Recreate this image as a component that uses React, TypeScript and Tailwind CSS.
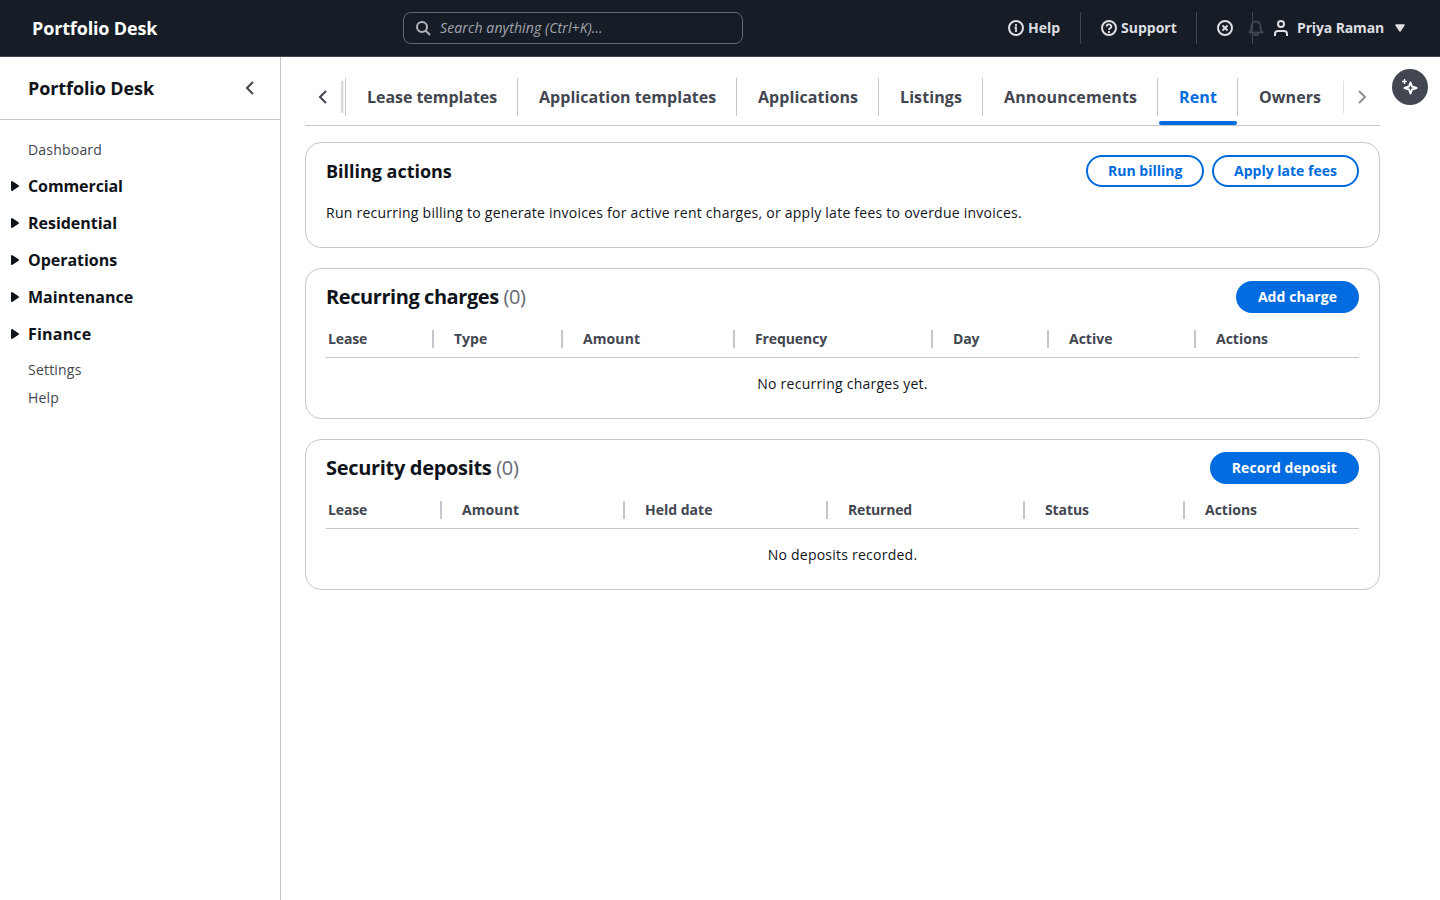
import React from "react";

const tabs = [
  { label: "Lease templates", width: "w-[172px] tracking-[-0.05px]" },
  { label: "Application templates", width: "w-[219px] tracking-[0.04px]" },
  { label: "Applications", width: "w-[142px] tracking-[0.07px]" },
  { label: "Listings", width: "w-[104px] tracking-[0.1px]" },
  { label: "Announcements", width: "w-[175px] tracking-[0.15px]" },
  { label: "Rent", width: "w-[80px] tracking-[0.15px]", active: true },
  { label: "Owners", width: "w-[106px] tracking-[0.07px]" },
];

const sections = [
  { label: "Commercial", tracking: "tracking-[-0.1px]" },
  { label: "Residential", tracking: "tracking-[-0.03px]" },
  { label: "Operations", tracking: "tracking-[-0.03px]" },
  { label: "Maintenance", tracking: "tracking-[0.03px]" },
  { label: "Finance", tracking: "tracking-[0.2px]" },
];

const chargeColumns = [
  { label: "Lease", width: "w-[108px] tracking-[-0.15px]" },
  { label: "Type", width: "w-[129px]" },
  { label: "Amount", width: "w-[172px] tracking-[0.1px]" },
  { label: "Frequency", width: "w-[198px] tracking-[-0.1px]" },
  { label: "Day", width: "w-[116px] tracking-[-0.2px]" },
  { label: "Active", width: "w-[147px]" },
  { label: "Actions", width: "w-[163px]" },
];

const depositColumns = [
  { label: "Lease", width: "w-[116px] tracking-[-0.15px]" },
  { label: "Amount", width: "w-[183px] tracking-[0.1px]" },
  { label: "Held date", width: "w-[203px]" },
  { label: "Returned", width: "w-[197px] tracking-[-0.18px]" },
  { label: "Status", width: "w-[160px] tracking-[-0.1px]" },
  { label: "Actions", width: "w-[174px]" },
];

type Column = { label: string; width: string };

function Icon({ children, className = "" }: { children: React.ReactNode; className?: string }) {
  return (
    <svg
      viewBox="0 0 16 16"
      fill="none"
      stroke="currentColor"
      strokeWidth={2}
      strokeLinejoin="round"
      className={`size-4 shrink-0 ${className}`}
    >
      {children}
    </svg>
  );
}

function Button({
  children,
  primary,
  className = "",
}: {
  children: React.ReactNode;
  primary?: boolean;
  className?: string;
}) {
  return (
    <button
      className={`h-8 rounded-full border-2 border-[#006ce0] px-5 text-sm leading-5 font-bold whitespace-nowrap ${
        primary ? "bg-[#006ce0] tracking-[0.07px] text-white" : "bg-white text-[#006ce0]"
      } ${className}`}
    >
      {children}
    </button>
  );
}

function TopBar() {
  return (
    <header className="flex h-[57px] items-center border-b border-[#424650] bg-[#161d26] pl-8 text-sm font-bold text-[#dedee3]">
      <div className="w-[371px] text-lg tracking-[-0.15px] text-white">Portfolio Desk</div>
      <div className="flex h-8 w-[340px] items-center rounded-lg border border-[#656871] pl-[11px]">
        <Icon className="text-[#b4b4bb]">
          <circle cx="7" cy="7" r="5" />
          <path d="m15 15-4.5-4.5" />
        </Icon>
        <span className="pl-[9px] font-normal tracking-[0.12px] text-[#a4a4ad] italic">
          Search anything (Ctrl+K)...
        </span>
      </div>
      <div className="ml-[265px] flex h-8 w-[73px] items-center gap-1 border-r border-[#424650]">
        <Icon>
          <circle cx="8" cy="8" r="7" />
          <path d="M8 12V7.5H6.5M8 4v2" strokeLinejoin="miter" strokeWidth={1.8} />
        </Icon>
        Help
      </div>
      <div className="flex h-8 w-[116px] items-center gap-1 border-r border-[#424650] pl-5">
        <Icon>
          <circle cx="8" cy="8" r="7" />
          <path d="M5.7 6.5a2.3 2.1 0 1 1 3.3 1.8c-.7.4-1 .7-1 1.7M8 11v2" strokeWidth={1.8} />
        </Icon>
        Support
      </div>
      <div className="relative flex h-8 w-14 items-center border-r border-[#424650] pl-5">
        <Icon>
          <circle cx="8" cy="8" r="7" />
          <path d="m5.500 5.500 5 5m0-5-5 5" />
        </Icon>
        <Icon className="absolute top-2 left-[51px] text-[#424650]">
          <path
            d="M3.500 9V6a4.500 4.500 0 0 1 9 0v3l2 3.500h-13L3.500 9ZM5.700 13a2.300 2.300 0 0 0 4.600 0"
            strokeWidth={1.9}
          />
        </Icon>
      </div>
      <div className="flex items-center pl-5">
        <Icon>
          <circle cx="8" cy="4" r="3" />
          <path d="M2 16v-2a3 3 0 0 1 3-3h6a3 3 0 0 1 3 3v2" />
        </Icon>
        <span className="w-[95px] pl-2 tracking-[-0.14px] whitespace-nowrap">Priya Raman</span>
        <Icon className="ml-2">
          <path d="M4 5h8l-4 6-4-6Z" fill="currentColor" strokeWidth={1.5} />
        </Icon>
      </div>
    </header>
  );
}

function SideNav() {
  return (
    <nav className="w-[281px] shrink-0 border-r border-[#c6c6cd]">
      <div className="flex h-[63px] items-center justify-between border-b border-[#c6c6cd] pr-[22px] pl-7">
        <h2 className="text-lg font-bold tracking-[-0.1px]">Portfolio Desk</h2>
        <Icon className="text-[#424650]">
          <path d="m11 2-6 6 6 6" strokeLinejoin="miter" />
        </Icon>
      </div>
      <div className="pt-5 pl-7 text-sm leading-5 tracking-[0.2px] text-[#424650]">
        <div className="mb-[7px]">Dashboard</div>
        {sections.map((s) => (
          <div key={s.label} className="-ml-[21px] flex h-[37px] items-center text-base font-bold text-[#0f141a]">
            <Icon>
              <path d="M5 4v8l6-4-6-4Z" fill="currentColor" />
            </Icon>
            <span className={`pl-[5px] ${s.tracking}`}>{s.label}</span>
          </div>
        ))}
        <div className="mt-2">Settings</div>
        <div className="mt-2">Help</div>
      </div>
    </nav>
  );
}

function TabBar() {
  return (
    <div className="flex h-[53px] border-b border-[#c6c6cd]">
      <div className="flex h-12 w-[40px] items-center pl-[10px]">
        <Icon className="text-[#424650]">
          <path d="m11 2-6 6 6 6" strokeLinejoin="miter" />
        </Icon>
        <div className="ml-[10px] h-8 w-[3px] border-l border-[#d4d4da] bg-linear-to-r from-[#d4d4da] to-[#f6f6f9]" />
      </div>
      {tabs.map((t) => (
        <div key={t.label} className={`relative shrink-0 pt-[5px] ${t.width}`}>
          <div
            className={`flex h-[38px] items-center border-l border-[#c6c6cd] pl-[21px] text-base font-bold whitespace-nowrap ${
              t.active ? "text-[#006ce0]" : "text-[#424650]"
            }`}
          >
            {t.label}
          </div>
          {t.active && (
            <div className="absolute bottom-0 left-[2px] h-1 w-[78px] rounded-[2px] bg-[#006ce0]" />
          )}
        </div>
      ))}
      <div className="mt-2 flex h-8 shrink-0 items-center border-l border-[#dedee3] pl-[10px]">
        <Icon className="text-[#8c8c94]">
          <path d="m5 2 6 6-6 6" strokeLinejoin="miter" />
        </Icon>
      </div>
    </div>
  );
}

function TableCard({
  title,
  titleClass,
  action,
  columns,
  empty,
}: {
  title: string;
  titleClass: string;
  action: string;
  columns: Column[];
  empty: string;
}) {
  return (
    <section className="h-[151px] rounded-2xl border border-[#c6c6cd] px-5 pt-3">
      <div className="flex items-center justify-between">
        <h2 className={`text-xl leading-6 font-bold ${titleClass}`}>
          {title} <span className="font-normal tracking-[-0.4px] text-[#656871]">(0)</span>
        </h2>
        <Button primary>{action}</Button>
      </div>
      <div className="mt-2 flex h-[37px] items-center border-b border-[#c6c6cd] text-sm font-bold text-[#424650]">
        {columns.map((c, i) => (
          <div
            key={c.label}
            className={`flex h-[18px] shrink-0 items-center ${c.width} ${i === 0 ? "pl-[2px]" : "pl-5"} ${
              i < columns.length - 1 ? "border-r-2 border-[#c6c6cd]" : ""
            }`}
          >
            {c.label}
          </div>
        ))}
      </div>
      <p className="pt-4 text-center text-sm leading-5 tracking-[0.24px]">{empty}</p>
    </section>
  );
}

export default function App() {
  return (
    <div className="h-[900px] w-[1440px] overflow-hidden bg-white font-['Open_Sans',sans-serif] text-[#0f141a]">
      <TopBar />
      <div className="flex h-[843px]">
        <SideNav />
        <main className="w-[1099px] shrink-0 pt-4 pl-6">
          <TabBar />
          <div className="mt-4 flex flex-col gap-5">
            <section className="h-[106px] rounded-2xl border border-[#c6c6cd] px-5 pt-3">
              <div className="flex items-center gap-2">
                <h3 className="grow text-lg font-bold tracking-[-0.02px]">Billing actions</h3>
                <Button className="w-[118px]">Run billing</Button>
                <Button className="w-[147px]">Apply late fees</Button>
              </div>
              <p className="mt-4 text-sm leading-5 tracking-[0.246px]">
                Run recurring billing to generate invoices for active rent charges, or apply late fees to overdue
                invoices.
              </p>
            </section>
            <TableCard
              title="Recurring charges"
              titleClass="tracking-[-0.43px]"
              action="Add charge"
              columns={chargeColumns}
              empty="No recurring charges yet."
            />
            <TableCard
              title="Security deposits"
              titleClass="tracking-[-0.32px]"
              action="Record deposit"
              columns={depositColumns}
              empty="No deposits recorded."
            />
          </div>
        </main>
        <aside className="pt-3 pl-3">
          <button className="flex size-9 items-center justify-center rounded-full bg-[#424650] text-white">
            <Icon>
              <path
                d="M8.500 3.500 10 7.500l4.500 1.500-4.500 1.500-1.500 4-1.500-4L2.500 9 7 7.500l1.500-4Z"
                strokeWidth={2}
              />
              <path d="M2.500 0v5M0 2.500h5" strokeWidth={1.3} />
            </Icon>
          </button>
        </aside>
      </div>
    </div>
  );
}
